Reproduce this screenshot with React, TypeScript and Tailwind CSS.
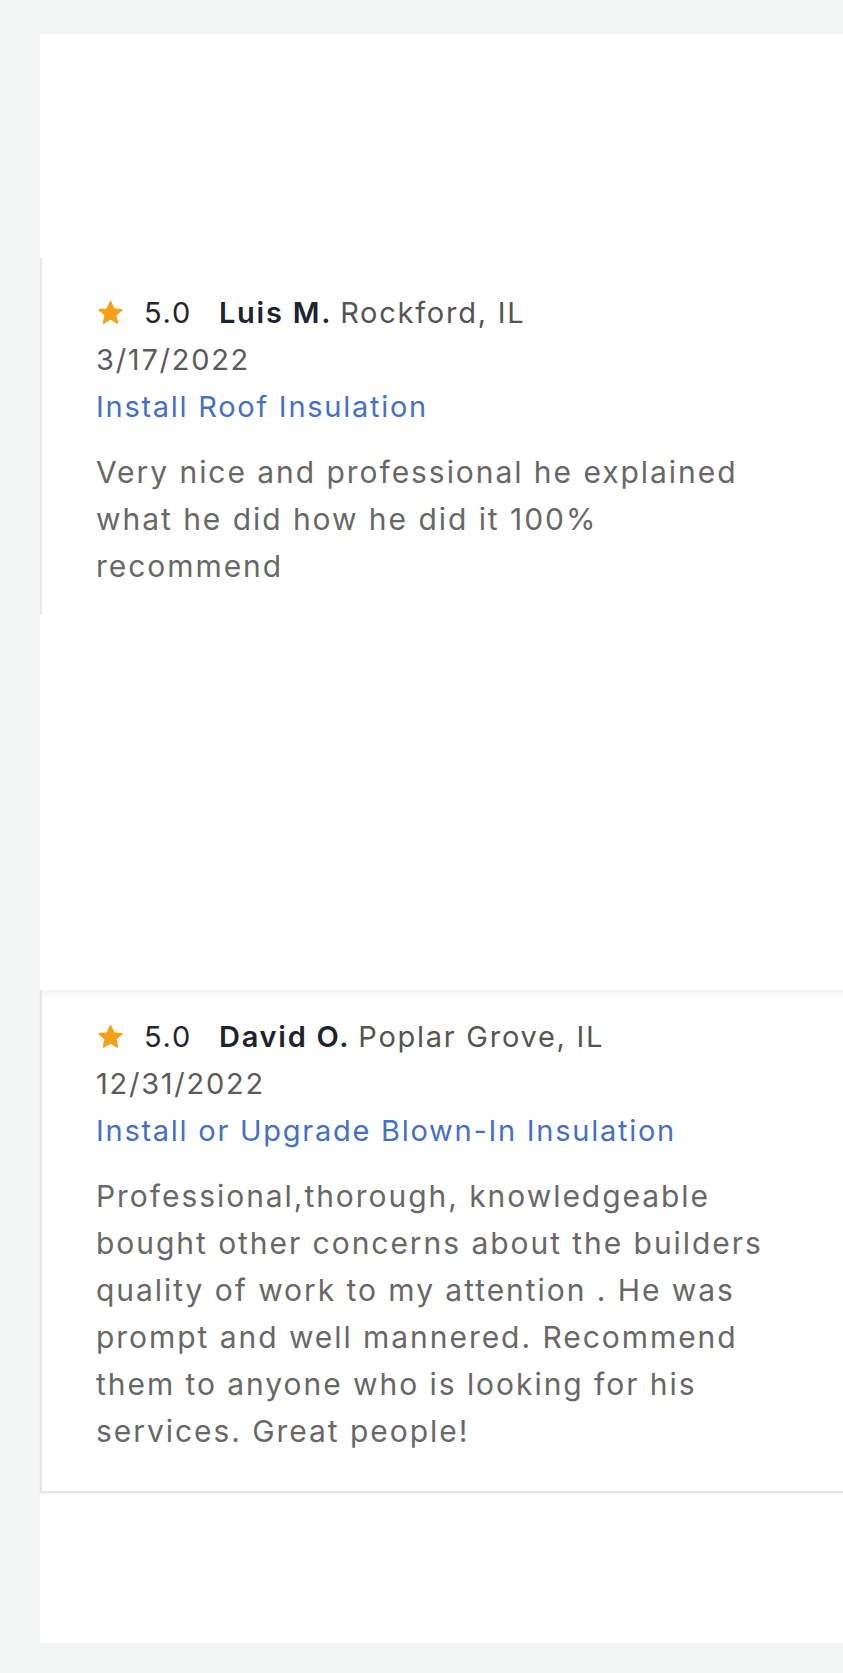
import React from "react";

type Review = {
  name: string;
  city: string;
  date: string;
  job: string;
  text: string;
};

const reviews: Review[] = [
  {
    name: "Luis M.",
    city: "Rockford, IL",
    date: "3/17/2022",
    job: "Install Roof Insulation",
    text: "Very nice and professional he explained what he did how he did it 100% recommend",
  },
  {
    name: "David O.",
    city: "Poplar Grove, IL",
    date: "12/31/2022",
    job: "Install or Upgrade Blown-In Insulation",
    text: "Professional,thorough, knowledgeable bought other concerns about the builders quality of work to my attention . He was prompt and well mannered. Recommend them to anyone who is looking for his services. Great people!",
  },
];

function Star() {
  return (
    <svg width="29" height="28" viewBox="0 0 24 24" className="shrink-0">
      <path
        d="M12 2.2l2.9 6.3 6.9.7-5.2 4.6 1.5 6.8L12 17.1l-6.1 3.5 1.5-6.8-5.2-4.6 6.9-.7z"
        fill="#f6a019"
        stroke="#f6a019"
        strokeWidth="1.2"
        strokeLinejoin="round"
      />
    </svg>
  );
}

function ReviewBody({ r }: { r: Review }) {
  return (
    <div className="pl-[54px] pr-[58px]">
      <div className="tracking-[0.06em]">
        <div className="flex items-center h-[47px]">
          <Star />
          <span className="ml-[19px] text-[#23262b]">5.0</span>
          <span className="ml-[27px] font-semibold text-[#1d2330]">{r.name}</span>
          <span className="ml-[8px] text-[#555555]">{r.city}</span>
        </div>
        <div className="text-[#5b5b5b]">{r.date}</div>
        <div className="text-[#4670c5]">{r.job}</div>
      </div>
      <p className="mt-[19px] text-[30px] tracking-[0.065em] text-[#686868]">{r.text}</p>
    </div>
  );
}

export default function App() {
  return (
    <div
      className="min-h-screen bg-[#f4f5f5] pt-[34px] pl-[40px] pb-[30px]"
      style={{ fontFamily: "Inter, 'Noto Sans', sans-serif" }}
    >
      <div className="bg-white h-[1609px] flex flex-col text-[29px] leading-[47px]">
        {/* EMPTY TOP */}
        <div className="h-[224px]" />

        {/* CARD 1 */}
        <div className="h-[357px] border-l-2 border-[#e9e9e9] pt-[31px]">
          <ReviewBody r={reviews[0]} />
        </div>

        <div className="h-[375px]" />

        {/* CARD 2 */}
        <div className="h-[503px] border-l-2 border-b-2 border-[#e6e6e6] pt-[23px] shadow-[inset_0_10px_12px_-8px_rgba(0,0,0,0.07),0_1px_2px_rgba(0,0,0,0.06)]">
          <ReviewBody r={reviews[1]} />
        </div>
      </div>
    </div>
  );
}
